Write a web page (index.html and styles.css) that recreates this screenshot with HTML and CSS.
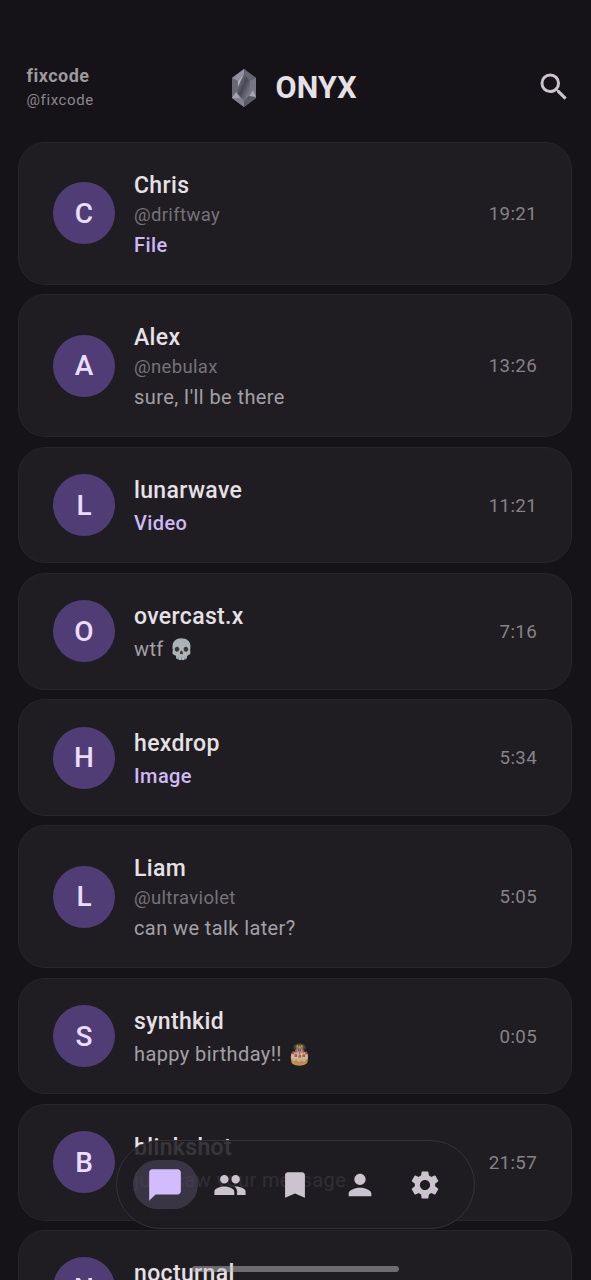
FILE: index.html
```html
<!DOCTYPE html>
<html lang="en">
<head>
<meta charset="utf-8">
<title>ONYX</title>
<link rel="stylesheet" href="styles.css">
</head>
<body>
<div class="app">
<header class="header">
  <div class="account"><div class="account-name">fixcode</div><div class="account-handle">@fixcode</div></div>
  <div class="brand">
    <svg class="gem" viewBox="0 0 26 40">
      <defs><linearGradient id="core" x1="0" y1="0" x2="1" y2="1"><stop offset="0" stop-color="#8d8c98"/><stop offset=".45" stop-color="#474654"/><stop offset="1" stop-color="#8f8e9b"/></linearGradient></defs>
      <path d="M13 1 25 10V30L13 39 1 30V10z" fill="#6e6d79"/>
      <path d="M13 1 1 10l6 3 6-7z" fill="#9190a0"/><path d="M13 1v5l6 7 6-3z" fill="#656472"/>
      <path d="M1 10l6 3v13l-6 4z" fill="#686776"/><path d="M25 10l-6 3v13l6 4z" fill="#777686"/>
      <path d="M1 30l6-4 6 7v6z" fill="#81808e"/><path d="M25 30l-6-4-6 7v6z" fill="#5b5a69"/>
      <path d="M1 30l4-6 4 6zM25 29l-3-7-4 6z" fill="#a5a4b0"/>
      <path d="M13 6l6 7v13l-6 7-6-7V13z" fill="url(#core)"/>
      <path d="M13 6l-6 7v6l3-7z" fill="#b0afba"/>
    </svg>
    <span class="brand-name">ONYX</span>
  </div>
  <svg class="search" viewBox="0 0 24 24"><path d="M15.5 14h-.79l-.28-.27A6.471 6.471 0 0 0 16 9.5 6.5 6.5 0 1 0 9.5 16c1.61 0 3.09-.59 4.23-1.57l.27.28v.79l5 4.99L20.49 19l-4.99-5zm-6 0C7.01 14 5 11.99 5 9.5S7.01 5 9.5 5 14 7.01 14 9.5 11.99 14 9.5 14z"/></svg>
</header>
<main class="chats">
  <article class="chat tall"><div class="avatar">C</div><div class="body"><div class="name">Chris</div><div class="handle">@driftway</div><div class="msg media">File</div></div><time class="time">19:21</time></article>
  <article class="chat tall"><div class="avatar">A</div><div class="body"><div class="name">Alex</div><div class="handle">@nebulax</div><div class="msg">sure, I'll be there</div></div><time class="time">13:26</time></article>
  <article class="chat"><div class="avatar">L</div><div class="body"><div class="name">lunarwave</div><div class="msg media">Video</div></div><time class="time">11:21</time></article>
  <article class="chat"><div class="avatar">O</div><div class="body"><div class="name">overcast.x</div><div class="msg">wtf <span class="emoji">💀</span></div></div><time class="time">7:16</time></article>
  <article class="chat"><div class="avatar">H</div><div class="body"><div class="name">hexdrop</div><div class="msg media">Image</div></div><time class="time">5:34</time></article>
  <article class="chat tall"><div class="avatar">L</div><div class="body"><div class="name">Liam</div><div class="handle">@ultraviolet</div><div class="msg">can we talk later?</div></div><time class="time">5:05</time></article>
  <article class="chat"><div class="avatar">S</div><div class="body"><div class="name">synthkid</div><div class="msg">happy birthday!! <span class="emoji">🎂</span></div></div><time class="time">0:05</time></article>
  <article class="chat"><div class="avatar">B</div><div class="body"><div class="name">blinkshot</div><div class="msg">just saw your message</div></div><time class="time">21:57</time></article>
  <article class="chat"><div class="avatar">N</div><div class="body"><div class="name">nocturnal</div><div class="msg"></div></div></article>
</main>
<nav class="nav">
  <span class="tab active"><svg viewBox="0 0 24 24"><path d="M20 2H4c-1.100 0-2 .9-2 2v18l4-4h14c1.100 0 2-.9 2-2V4c0-1.100-.9-2-2-2z"/></svg></span>
  <span class="tab"><svg viewBox="0 0 24 24"><path d="M16 11c1.660 0 2.990-1.340 2.990-3S17.660 5 16 5s-3 1.340-3 3 1.340 3 3 3zm-8 0c1.660 0 2.990-1.340 2.990-3S9.660 5 8 5 5 6.340 5 8s1.340 3 3 3zm0 2c-2.330 0-7 1.170-7 3.500V19h14v-2.500c0-2.330-4.670-3.500-7-3.500zm8 0c-.29 0-.62.020-.97.050 1.160.840 1.970 1.970 1.970 3.450V19h6v-2.500c0-2.330-4.670-3.500-7-3.500z"/></svg></span>
  <span class="tab"><svg viewBox="0 0 24 24"><path d="M17 3H7c-1.100 0-2 .9-2 2v16l7-3 7 3V5c0-1.100-.9-2-2-2z"/></svg></span>
  <span class="tab"><svg viewBox="0 0 24 24"><path d="M12 12c2.210 0 4-1.790 4-4s-1.790-4-4-4-4 1.790-4 4 1.790 4 4 4zm0 2c-2.670 0-8 1.340-8 4v2h16v-2c0-2.660-5.330-4-8-4z"/></svg></span>
  <span class="tab"><svg viewBox="0 0 24 24"><path d="M19.140 12.940c.04-.3.06-.61.06-.94 0-.32-.02-.64-.07-.94l2.030-1.580c.18-.14.23-.41.12-.61l-1.920-3.320c-.12-.22-.37-.29-.59-.22l-2.390.96c-.5-.38-1.030-.7-1.620-.94l-.36-2.540c-.04-.24-.24-.41-.48-.41h-3.840c-.24 0-.43.17-.47.41l-.36 2.540c-.59.24-1.130.57-1.620.94l-2.390-.96c-.22-.08-.47 0-.59.22L2.740 8.870c-.12.21-.08.47.12.61l2.030 1.580c-.05.3-.09.63-.09.94s.02.64.07.94l-2.030 1.580c-.18.14-.23.41-.12.61l1.920 3.320c.12.22.37.29.59.22l2.390-.96c.5.38 1.030.7 1.620.94l.36 2.540c.05.24.24.41.48.41h3.840c.24 0 .44-.17.47-.41l.36-2.540c.59-.24 1.130-.56 1.620-.94l2.390.96c.22.08.47 0 .59-.22l1.920-3.320c.12-.22.07-.47-.12-.61l-2.010-1.580zM12 15.600c-1.980 0-3.600-1.620-3.600-3.600s1.620-3.600 3.600-3.600 3.600 1.620 3.600 3.600-1.620 3.600-3.600 3.600z"/></svg></span>
</nav>
<div class="home-bar"></div>
</div>
</body>
</html>
```
FILE: styles.css
```css
* { box-sizing: border-box; }
body { margin: 0; background: #151318; font-family: Roboto, "Liberation Sans", sans-serif; color: #e6e1e6; }
.app { position: relative; width: 591px; height: 1280px; overflow: hidden; }
.header { height: 142px; padding: 64px 21px 0 26.500px; display: grid; grid-template-columns: 204px auto 1fr; align-items: start; }
.account-name { font-size: 18px; line-height: 24px; font-weight: 700; letter-spacing: .5px; color: #9c999f; }
.account-handle { font-size: 15px; line-height: 25px; letter-spacing: .6px; color: #8b888e; }
.brand { display: flex; align-items: center; height: 48px; gap: 19px; }
.gem { width: 26px; height: 40px; }
.brand-name { font-size: 30.500px; line-height: 36px; font-weight: 700; letter-spacing: .2px; margin-top: -1px; }
.search { width: 36px; height: 36px; justify-self: end; margin-top: 5px; margin-right: -2px; fill: #cbc4ce; }
.chats { display: flex; flex-direction: column; gap: 9.500px; padding: 0 19px 0 18px; }
.chat { flex: none; height: 116.700px; padding: 0 34px; display: flex; align-items: center; background: #1f1d21; border: 1.500px solid #27252a; border-radius: 27px; }
.chat.tall { height: 142.900px; }
.avatar { flex: none; width: 62px; height: 62px; border-radius: 50%; background: #513d75; color: #eaddff; display: flex; align-items: center; justify-content: center; font-size: 28px; font-weight: 500; }
.body { flex: 1; margin-left: 19px; padding-top: 4px; white-space: nowrap; }
.name { font-size: 23px; line-height: 33px; font-weight: 500; letter-spacing: .35px; }
.handle { font-size: 18.500px; line-height: 26px; letter-spacing: .35px; color: #757378; }
.msg { font-size: 20px; line-height: 33px; min-height: 33px; letter-spacing: .4px; color: #a3a0a6; }
.tall .msg { line-height: 34px; }
.msg.media { color: #cdb9f7; font-weight: 500; }
.emoji { opacity: .75; }
.time { font-size: 18.700px; letter-spacing: .35px; padding-top: 1px; color: #858388; }
.nav { position: absolute; left: 116px; top: 1140px; width: 359px; height: 89px; padding-right: 1px; border: 1.500px solid #343237; border-radius: 45px; background: rgba(31, 29, 33, .87); display: flex; align-items: center; justify-content: center; }
.tab { width: 65px; height: 49px; border-radius: 25px; display: flex; align-items: center; justify-content: center; }
.tab.active { background: rgba(74, 68, 88, .65); }
.tab svg { width: 34px; height: 34px; fill: #cbc4ce; }
.tab.active svg { width: 38px; height: 38px; fill: #d3bcfd; }
.home-bar { position: absolute; left: 192px; top: 1266px; width: 207px; height: 6px; border-radius: 3px; background: rgba(190, 187, 192, .5); }
```
